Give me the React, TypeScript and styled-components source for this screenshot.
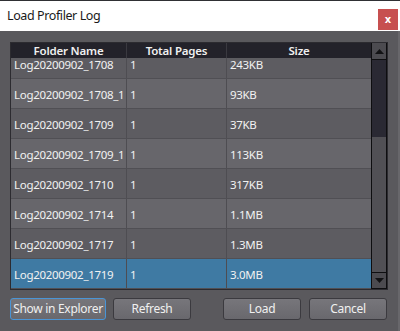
import React from 'react';
import styled, { createGlobalStyle } from 'styled-components';

const GlobalStyle = createGlobalStyle`
  html, body {
    margin: 0;
    padding: 0;
    background: #59585c;
  }
  * { box-sizing: border-box; }
`;

const Window = styled.div`
  width: 400px;
  height: 331px;
  display: flex;
  flex-direction: column;
  font-family: 'Noto Sans', 'Open Sans', sans-serif;
  font-size: 11px;
  letter-spacing: -0.2px;
  overflow: hidden;
`;

const TitleBar = styled.div`
  height: 31px;
  flex-shrink: 0;
  background: #ffffff;
  display: flex;
  align-items: center;
  justify-content: space-between;
  padding: 0 2px 0 7px;
  border-top: 1px solid #2f3034;
`;

const Title = styled.span`
  font-size: 12.5px;
  color: #1a1a1a;
  letter-spacing: -0.4px;
  margin-top: -1px;
`;

const CloseButton = styled.button`
  width: 20px;
  height: 21px;
  margin-top: 6px;
  border: none;
  padding: 0;
  background: #c75050;
  color: #ffffff;
  font-family: 'DejaVu Sans', sans-serif;
  font-size: 10px;
  font-weight: bold;
  display: flex;
  align-items: center;
  justify-content: center;
`;

const Body = styled.div`
  flex: 1;
  background: #5a595d;
  border-right: 2px solid #68676b;
  padding: 11px 10px 0 10px;
  display: flex;
  flex-direction: column;
`;

const TableFrame = styled.div`
  height: 248px;
  border: 1px solid #2c2b30;
  display: flex;
`;

const TableArea = styled.div`
  flex: 1;
  display: flex;
  flex-direction: column;
  min-width: 0;
`;

const Columns = styled.div`
  display: grid;
  grid-template-columns: 115px 100px 1fr;
`;

const HeaderRow = styled(Columns)`
  height: 15px;
  background: #23222a;
  color: #f0f0f0;
  font-size: 11.5px;
  font-weight: 600;
  line-height: 15px;
  position: relative;
  z-index: 1;
`;

const HeaderCell = styled.div`
  text-align: center;
  border-left: 1px solid #3a3940;
  &:first-child { border-left: none; }
`;

const Viewport = styled.div`
  flex: 1;
  overflow: hidden;
`;

const RowList = styled.div<{ $offset: number }>`
  margin-top: ${({ $offset }) => -$offset}px;
`;

const Row = styled(Columns)<{ $alt: boolean; $selected: boolean }>`
  height: 30px;
  background: ${({ $alt, $selected }) => ($selected ? '#3f7aa3' : $alt ? '#67666b' : '#5d5c61')};
  border-bottom: 1px solid #504f54;
  color: #f2f2f2;
  font-size: 11.5px;
  letter-spacing: -0.3px;
  line-height: 31px;
`;

const Cell = styled.div`
  padding-left: 3px;
  white-space: nowrap;
  overflow: hidden;
  border-left: 1px solid #4e4d52;
  &:first-child { border-left: none; }
`;

const ScrollBar = styled.div`
  width: 16px;
  background: #515055;
  border-left: 1px solid #0e0e10;
  border-right: 1px solid #0e0e10;
  display: flex;
  flex-direction: column;
`;

const ScrollButton = styled.div`
  height: 17px;
  background: #4c4b50;
  border-top: 1px solid #0e0e10;
  border-bottom: 1px solid #0e0e10;
  display: flex;
  align-items: center;
  justify-content: center;
  &:first-child { border-top: none; }
`;

const Track = styled.div`
  flex: 1;
  display: flex;
  flex-direction: column;
`;

const Thumb = styled.div`
  height: 77px;
  background: #2a2933;
`;

const ButtonRow = styled.div`
  display: flex;
  margin-top: 8px;
`;

const Button = styled.button<{ $width: number; $focused?: boolean; $gap?: number }>`
  width: ${({ $width }) => $width}px;
  height: 22px;
  margin-left: ${({ $gap }) => $gap ?? 0}px;
  border: 1px solid ${({ $focused }) => ($focused ? '#4a95d6' : '#3b3a3f')};
  border-radius: 3px;
  background: linear-gradient(#77767b, #69686d);
  color: #f0f0f0;
  font-family: 'Noto Sans', 'Open Sans', sans-serif;
  font-size: 12px;
  letter-spacing: -0.3px;
  white-space: nowrap;
  padding: 0;
  line-height: 18px;
`;

const Arrow = ({ up }: { up: boolean }) => (
  <svg width="9" height="5" viewBox="0 0 9 5">
    <path d={up ? 'M0 5 L4.5 0 L9 5 Z' : 'M0 0 L4.5 5 L9 0 Z'} fill="#121214" />
  </svg>
);

const logs = [
  { name: 'Log20200902_1708', pages: '1', size: '243KB' },
  { name: 'Log20200902_1708_1', pages: '1', size: '93KB' },
  { name: 'Log20200902_1709', pages: '1', size: '37KB' },
  { name: 'Log20200902_1709_1', pages: '1', size: '113KB' },
  { name: 'Log20200902_1710', pages: '1', size: '317KB' },
  { name: 'Log20200902_1714', pages: '1', size: '1.1MB' },
  { name: 'Log20200902_1717', pages: '1', size: '1.3MB' },
  { name: 'Log20200902_1719', pages: '1', size: '3.0MB' },
];

export default function App() {
  const selected = logs.length - 1;
  return (
    <Window>
      <GlobalStyle />
      <TitleBar>
        <Title>Load Profiler Log</Title>
        <CloseButton>x</CloseButton>
      </TitleBar>
      <Body>
        <TableFrame>
          <TableArea>
            <HeaderRow>
              <HeaderCell>Folder Name</HeaderCell>
              <HeaderCell>Total Pages</HeaderCell>
              <HeaderCell>Size</HeaderCell>
            </HeaderRow>
            <Viewport>
              <RowList $offset={9}>
                {logs.map((log, i) => (
                  <Row key={log.name} $alt={i % 2 === 1} $selected={i === selected}>
                    <Cell>{log.name}</Cell>
                    <Cell>{log.pages}</Cell>
                    <Cell>{log.size}</Cell>
                  </Row>
                ))}
              </RowList>
            </Viewport>
          </TableArea>
          <ScrollBar>
            <ScrollButton><Arrow up /></ScrollButton>
            <Track>
              <Thumb />
            </Track>
            <ScrollButton><Arrow up={false} /></ScrollButton>
          </ScrollBar>
        </TableFrame>
        <ButtonRow>
          <Button $width={96} $focused>Show in Explorer</Button>
          <Button $width={78} $gap={7}>Refresh</Button>
          <Button $width={78} $gap={32}>Load</Button>
          <Button $width={78} $gap={8}>Cancel</Button>
        </ButtonRow>
      </Body>
    </Window>
  );
}
